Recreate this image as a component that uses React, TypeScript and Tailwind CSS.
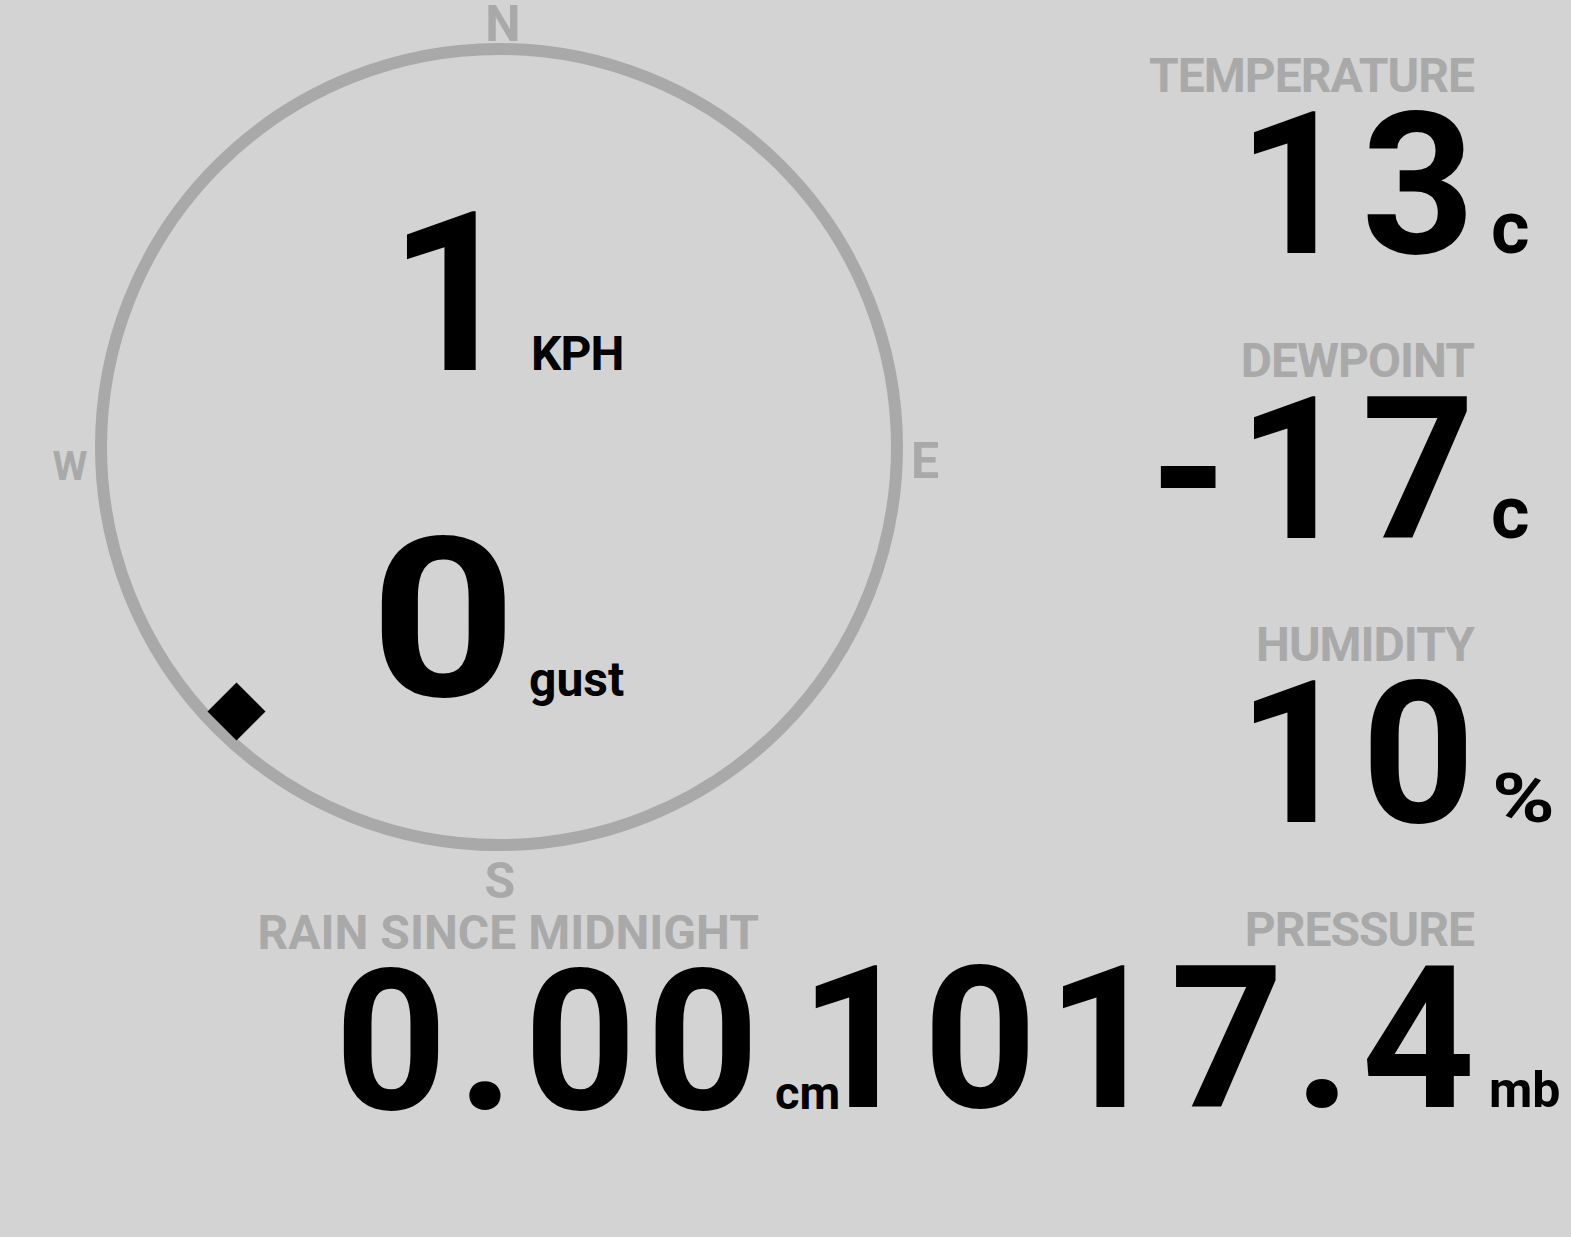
import React from 'react'

type StatProps = {
  label: string
  value: string
  unit: string
  unitClass: string
}

function Stat({ label, value, unit, unitClass }: StatProps) {
  return (
    <div className="h-[284.5px] flex flex-col">
      <div className="w-[475px] flex justify-end whitespace-nowrap text-[48px] leading-[48px] font-bold tracking-[-1px] text-[#a9a9a9]">
        <span className="mr-[1px]">{label}</span>
      </div>
      <div className="mt-[10px] flex items-baseline">
        <div className="w-[475px] shrink-0 flex justify-end text-[198px] leading-[150px] font-bold tracking-[10px] text-black">
          <span className="mr-[-10px]">{value}</span>
        </div>
        <span className={unitClass}>{unit}</span>
      </div>
    </div>
  )
}

export default function App() {
  return (
    <div className="w-[1571px] h-[1237px] bg-[#d3d3d3] overflow-hidden flex font-[Roboto,sans-serif]">
      {/* left: wind dial + rain */}
      <div className="w-[1000px] shrink-0 flex flex-col">
        <div className="relative h-[909px]">
          <div className="ml-[95px] mt-[43px] w-[808px] h-[808px] rounded-full border-[12px] border-[#a9a9a9] pt-[149px] flex flex-col">
            <div className="flex items-baseline">
              <div className="w-[409px] shrink-0 flex justify-end text-[222px] leading-[180px] font-bold text-black">
                1
              </div>
              <span className="ml-[15px] text-[48px] font-bold tracking-[-1px] text-black">KPH</span>
            </div>
            <div className="mt-[140px] flex items-baseline">
              <div className="w-[409px] shrink-0 flex justify-end text-[222px] leading-[180px] font-bold text-black">
                <span className="inline-block scale-x-[1.15] origin-right">0</span>
              </div>
              <span className="ml-[13px] text-[48px] font-bold text-black">gust</span>
            </div>
          </div>

          <span className="absolute left-[478px] top-[-1px] w-[50px] text-center text-[50px] leading-[50px] font-bold text-[#a9a9a9]">N</span>
          <span className="absolute left-[45px] top-[447px] w-[50px] text-center text-[40px] leading-[40px] font-bold text-[#a9a9a9]">W</span>
          <span className="absolute left-[900px] top-[436px] w-[50px] text-center text-[50px] leading-[50px] font-bold text-[#a9a9a9]">E</span>
          <span className="absolute left-[475px] top-[856px] w-[50px] text-center text-[50px] leading-[50px] font-bold text-[#a9a9a9]">S</span>

          {/* wind direction marker */}
          <div className="absolute left-[216px] top-[691px] w-[41px] h-[41px] bg-black rotate-45" />
        </div>

        <div className="ml-[259px] flex flex-col">
          <div className="w-[500px] flex justify-end whitespace-nowrap text-[48px] leading-[48px] font-bold text-[#a9a9a9]">
            <span>RAIN SINCE MIDNIGHT</span>
          </div>
          <div className="mt-[10px] flex items-baseline">
            <div className="w-[500px] shrink-0 flex justify-end text-[196px] leading-[150px] font-bold tracking-[10px] text-black">
              <span className="mr-[-10px]">0.00</span>
            </div>
            <span className="ml-[16px] text-[47px] font-bold text-black">cm</span>
          </div>
        </div>
      </div>

      {/* right: readings */}
      <div className="flex-1 pt-[52px] flex flex-col">
        <Stat label="TEMPERATURE" value="13" unit="c" unitClass="ml-[16px] text-[74px] font-bold text-black" />
        <Stat label="DEWPOINT" value="-17" unit="c" unitClass="ml-[16px] text-[74px] font-bold text-black" />
        <Stat label="HUMIDITY" value="10" unit="%" unitClass="ml-[17px] text-[68px] font-bold text-black inline-block scale-x-[1.25] origin-left" />
        <Stat label="PRESSURE" value="1017.4" unit="mb" unitClass="ml-[14px] text-[50px] font-bold text-black" />
      </div>
    </div>
  )
}
